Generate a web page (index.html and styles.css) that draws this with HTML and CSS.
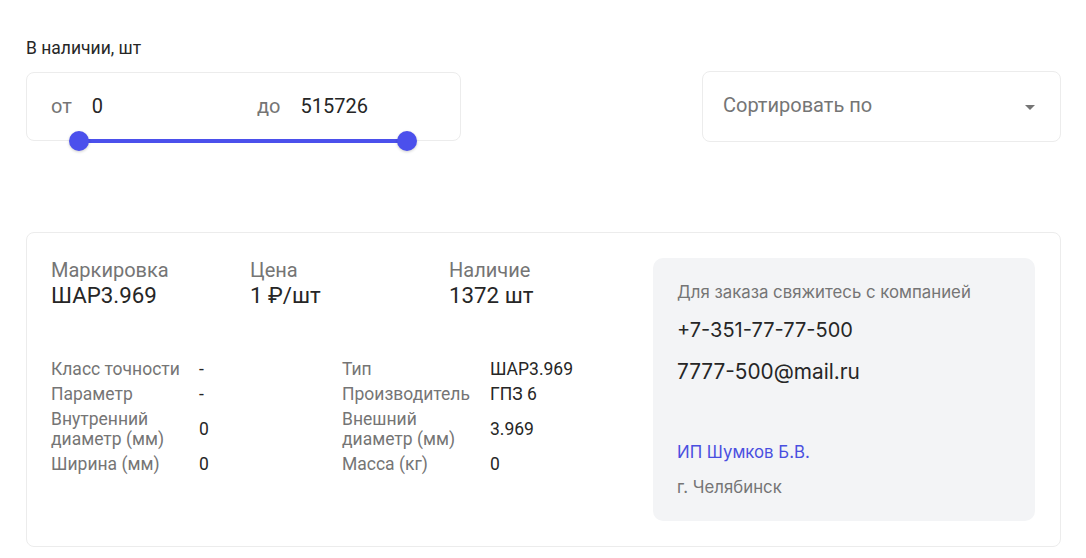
FILE: index.html
```html
<!DOCTYPE html>
<html lang="ru">
<head>
<meta charset="utf-8">
<link rel="stylesheet" href="styles.css">
</head>
<body>
<div class="page">
  <div class="filters">
    <div class="stock">
      <div class="stock-label">В наличии, шт</div>
      <div class="range-box">
        <div class="range-field range-from"><span class="range-pre">от</span><span class="range-val">0</span></div>
        <div class="range-field"><span class="range-pre">до</span><span class="range-val">515726</span></div>
        <div class="track"></div>
        <div class="thumb thumb-left"></div>
        <div class="thumb thumb-right"></div>
      </div>
    </div>
    <div class="sort-box">
      <span class="sort-text">Сортировать по</span>
      <svg class="sort-arrow" width="10" height="5" viewBox="0 0 10 5"><path d="M0 0h10L5 5z" fill="#757575"/></svg>
    </div>
  </div>

  <div class="card">
    <div class="card-main">
      <div class="summary">
        <div class="sum-col"><div class="sum-label">Маркировка</div><div class="sum-value">ШАР3.969</div></div>
        <div class="sum-col"><div class="sum-label">Цена</div><div class="sum-value">1 ₽/шт</div></div>
        <div class="sum-col"><div class="sum-label">Наличие</div><div class="sum-value">1372 шт</div></div>
      </div>
      <div class="specs">
        <div class="spec-l">Класс точности</div><div class="spec-v">-</div>
        <div class="spec-l">Тип</div><div class="spec-v">ШАР3.969</div>
        <div class="spec-l">Параметр</div><div class="spec-v">-</div>
        <div class="spec-l">Производитель</div><div class="spec-v">ГПЗ 6</div>
        <div class="spec-l">Внутренний диаметр (мм)</div><div class="spec-v">0</div>
        <div class="spec-l">Внешний диаметр (мм)</div><div class="spec-v">3.969</div>
        <div class="spec-l">Ширина (мм)</div><div class="spec-v">0</div>
        <div class="spec-l">Масса (кг)</div><div class="spec-v">0</div>
      </div>
    </div>
    <div class="contact">
      <div class="contact-note">Для заказа свяжитесь с компанией</div>
      <div class="contact-phone">+7-351-77-77-500</div>
      <div class="contact-mail">7777-500@mail.ru</div>
      <a class="contact-company" href="#">ИП Шумков Б.В.</a>
      <div class="contact-city">г. Челябинск</div>
    </div>
  </div>
</div>
</body>
</html>
```

FILE: styles.css
```css
* { box-sizing: border-box; }
html, body { margin: 0; padding: 0; background: #fff; }
body { font-family: Roboto, "Noto Sans", sans-serif; color: #262626; }

.page { padding: 38px 25px 0 26px; }

.filters { display: flex; justify-content: space-between; align-items: flex-end; }

.stock { width: 435px; }
.stock-label { font-size: 17.5px; line-height: 20px; color: #262626; margin-bottom: 14px; }

.range-box {
  position: relative;
  height: 69px;
  border: 1px solid #ececec;
  border-radius: 8px;
  display: flex;
  align-items: center;
  padding: 0 24px 2px 24px;
  font-size: 20px;
}
.range-field { display: flex; align-items: center; }
.range-from { width: 206px; }
.range-pre { color: #757575; margin-right: 20px; }
.range-val { color: #262626; }

.track {
  position: absolute;
  left: 52px; width: 329px;
  bottom: -3px; height: 4px;
  background: #4b50ec;
  border-radius: 2px;
}
.thumb {
  position: absolute;
  width: 20px; height: 20px;
  border-radius: 50%;
  background: #4b50ec;
  bottom: -11px;
  box-shadow: 0 1px 3px rgba(0,0,0,0.2);
}
.thumb-left { left: 42px; }
.thumb-right { left: 370px; }

.sort-box {
  width: 359px;
  height: 71px;
  border: 1px solid #ececec;
  border-radius: 8px;
  display: flex;
  align-items: center;
  justify-content: space-between;
  padding: 0 25px 4px 20px;
  margin-bottom: -1px;
}
.sort-text { font-size: 20px; color: #757575; }
.sort-arrow { display: block; margin-top: 5px; }

.card {
  margin-top: 91px;
  border: 1px solid #ececec;
  border-radius: 8px;
  padding: 25px 25px 25px 24px;
  display: flex;
  justify-content: space-between;
  align-items: flex-start;
}
.card-main { flex: 1; }

.summary { display: flex; }
.sum-col { width: 199px; }
.sum-label { font-size: 20px; line-height: 24px; color: #757575; }
.sum-value { font-size: 22.3px; line-height: 26px; color: #262626; }

.specs {
  margin-top: 51px;
  display: grid;
  grid-template-columns: 148px 143px 148px auto;
  row-gap: 5px;
  align-items: center;
  font-size: 17.5px;
  line-height: 20px;
}
.spec-l { color: #757575; padding-right: 6px; }
.spec-v { color: #262626; }

.contact {
  width: 382px;
  background: #f3f4f6;
  border-radius: 10px;
  padding: 22px 24px 22px 24px;
  font-family: Inter, Roboto, sans-serif;
  display: flex;
  flex-direction: column;
}
.contact-note { font-size: 16.8px; line-height: 24px; color: #757575; }
.contact-phone { font-size: 20px; line-height: 28px; color: #262626; margin-top: 12px; }
.contact-mail { font-size: 20.8px; line-height: 28px; color: #262626; margin-top: 14px; }
.contact-company { font-size: 16.8px; line-height: 24px; color: #4a4fe0; text-decoration: none; margin-top: 54px; }
.contact-city { font-size: 16.8px; line-height: 24px; color: #757575; margin-top: 11px; }
```
